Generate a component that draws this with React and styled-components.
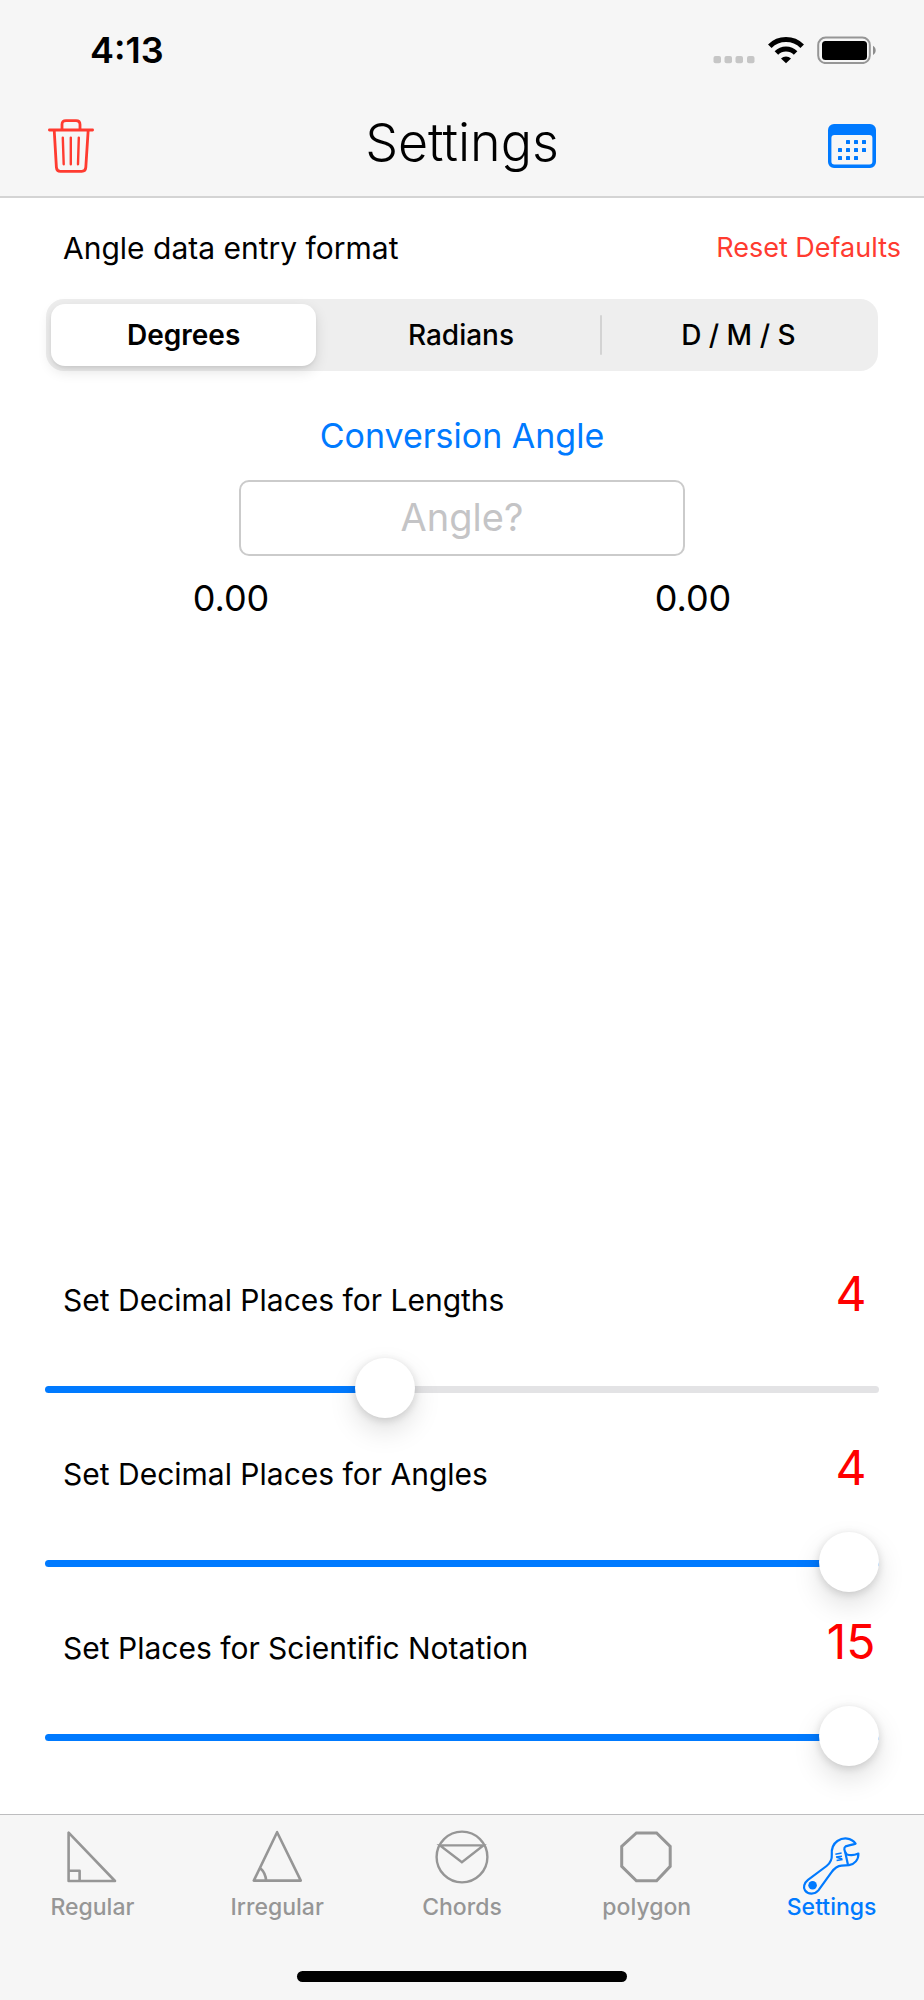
import React, { useState } from "react";
import styled, { createGlobalStyle } from "styled-components";

const BLUE = "#007aff";
const RED = "#ff3b30";

const GlobalStyle = createGlobalStyle`
  *, *::before, *::after { box-sizing: border-box; }
  body {
    margin: 0;
    background: #fff;
    color: #000;
    font-family: Inter, "Liberation Sans", sans-serif;
  }
  button, input { font-family: inherit; }
`;

const Screen = styled.div`
  min-height: 100vh;
  display: flex;
  flex-direction: column;
`;

const Header = styled.header`
  background: #f6f6f6;
  border-bottom: 2px solid #d4d4d4;
`;

const StatusBar = styled.div`
  height: 100px;
  padding: 0 47px 0 90px;
  display: flex;
  align-items: center;
  justify-content: space-between;
`;

const Time = styled.time`
  font-size: 36px;
  font-weight: 600;
`;

const StatusIcons = styled.div`
  display: flex;
  align-items: center;
  gap: 13px;

  svg { display: block; }
`;

const NavBar = styled.div`
  height: 96px;
  padding: 0 48px 4px;
  display: grid;
  grid-template-columns: 1fr auto 1fr;
  align-items: center;
`;

const IconButton = styled.button`
  justify-self: ${(p) => p.$align};
  padding: 0;
  border: 0;
  background: none;
  color: ${(p) => p.$color};

  svg { display: block; }
`;

const Title = styled.h1`
  margin: 0;
  padding-bottom: 6px;
  font-size: 52px;
  font-weight: 300;
  line-height: 60px;
`;

const Main = styled.main`
  flex: 1;
  display: flex;
  flex-direction: column;
`;

const FormatRow = styled.div`
  height: 101px;
  padding: 0 23px 2px 63px;
  display: flex;
  align-items: center;
  justify-content: space-between;
`;

const Caption = styled.span`
  font-size: 30px;
  line-height: 40px;
`;

const ResetButton = styled.button`
  padding: 0;
  border: 0;
  background: none;
  color: ${RED};
  font-size: 27px;
  line-height: 40px;
`;

const Segments = styled.div`
  height: 72px;
  margin: 0 46px;
  display: grid;
  grid-template-columns: repeat(3, 1fr);
  border-radius: 18px;
  background: #eee;
`;

const Segment = styled.label`
  position: relative;
  display: flex;
  padding: 5px 7px 5px 5px;

  &::before {
    content: "";
    display: ${(p) => (p.$divided ? "block" : "none")};
    position: absolute;
    left: -1px;
    top: 16px;
    width: 2px;
    height: 40px;
    border-radius: 1px;
    background: #d3d3d3;
  }

  input {
    appearance: none;
    position: absolute;
    inset: 5px;
    margin: 0;
  }

  span {
    flex: 1;
    display: flex;
    align-items: center;
    justify-content: center;
    border-radius: 14px;
    font-size: 28px;
    font-weight: 500;
  }

  input:checked + span {
    background: #fff;
    font-weight: 600;
    box-shadow: 0 5px 14px rgba(0, 0, 0, 0.12), 0 2px 3px rgba(0, 0, 0, 0.06);
  }
`;

const Conversion = styled.section`
  padding-top: 43px;
  display: flex;
  flex-direction: column;
  align-items: center;
`;

const ConversionLabel = styled.label`
  color: ${BLUE};
  font-size: 34px;
  line-height: 44px;
`;

const AngleInput = styled.input`
  width: 446px;
  max-width: 90%;
  height: 76px;
  margin-top: 22px;
  padding: 0 16px 2px;
  border: 2px solid #cbcbcb;
  border-radius: 10px;
  background: #fff;
  font-size: 38px;
  text-align: center;

  &::placeholder { color: #c4c4c6; opacity: 1; }
`;

const Results = styled.div`
  align-self: stretch;
  margin-top: 18px;
  display: grid;
  grid-template-columns: 1fr 1fr;
  text-align: center;
`;

const Result = styled.output`
  font-size: 36px;
  line-height: 48px;
`;

const Precision = styled.section`
  margin-top: auto;
  padding: 40px 45px 47px;
  display: flex;
  flex-direction: column;
  gap: 19px;
`;

const SettingHead = styled.div`
  padding-left: 18px;
  display: flex;
  align-items: baseline;
  justify-content: space-between;
`;

const SettingLabel = styled.label`
  font-size: 30px;
  line-height: 40px;
`;

const SettingValue = styled.output`
  width: 56px;
  display: flex;
  justify-content: center;
  color: #f00;
  font-size: 48px;
  line-height: 60px;
`;

const Slider = styled.input`
  appearance: none;
  display: block;
  width: 100%;
  height: 60px;
  margin: 35px 0 0;
  background: none;

  &::-webkit-slider-runnable-track {
    height: 7px;
    border-radius: 4px;
    background: linear-gradient(
      to right,
      ${BLUE} var(--fill),
      #e3e3e5 var(--fill)
    );
  }

  &::-webkit-slider-thumb {
    appearance: none;
    width: 60px;
    height: 60px;
    margin-top: -28px;
    border-radius: 50%;
    background: #fff;
    box-shadow: 0 12px 28px rgba(0, 0, 0, 0.13), 0 2px 8px rgba(0, 0, 0, 0.14);
  }
`;

const Footer = styled.footer`
  padding: 14px 0 18px;
  border-top: 1px solid #bdbdbf;
  background: #f6f6f6;
`;

const Tabs = styled.nav`
  display: grid;
  grid-template-columns: repeat(5, 1fr);
`;

const Tab = styled.a`
  display: flex;
  flex-direction: column;
  align-items: center;
  color: ${(p) => (p.$active ? BLUE : "#969696")};
  font-size: 23px;
  font-weight: 500;
  line-height: 26px;
  text-decoration: none;

  svg { display: block; overflow: visible; }
`;

const HomeIndicator = styled.div`
  width: 330px;
  height: 11px;
  margin: 51px auto 0;
  border-radius: 6px;
  background: #000;
`;

const SignalDots = () => (
  <svg width="42" height="28" viewBox="0 0 42 28" fill="#c6c6c6" aria-hidden="true">
    {[0, 11, 22, 33.5].map((x) => (
      <rect key={x} x={x + 0.5} y="20" width="7.5" height="7.3" rx="2" />
    ))}
  </svg>
);

const Wifi = () => (
  <svg width="36" height="28" viewBox="0 0 36 28" aria-hidden="true">
    <g fill="none" stroke="#000" strokeWidth="5">
      <path d="M1.8 10.2a23 23 0 0 1 32.4 0" />
      <path d="M8.4 17a13.6 13.6 0 0 1 19.2 0" />
    </g>
    <path d="M13 22.4a7.4 7.4 0 0 1 10 0L18 27.2z" />
  </svg>
);

const Battery = () => (
  <svg width="60" height="28" viewBox="0 0 60 28" aria-hidden="true">
    <rect x="1.2" y="1.5" width="51.6" height="25.6" rx="7.5" fill="none" stroke="#969696" strokeWidth="2" />
    <rect x="5" y="5" width="45" height="19" rx="3.5" />
    <path d="M56 9.8c3.6 2 3.6 7.2 0 9.2z" fill="#8d8d8d" />
  </svg>
);

const Trash = () => (
  <svg width="46" height="54" viewBox="0 0 46 54" fill="none" stroke="currentColor" strokeLinecap="round" strokeLinejoin="round" aria-hidden="true">
    <path strokeWidth="2.8" d="M1.4 11h43.2M14 11V5.6Q14 1.6 18 1.6h10Q32 1.6 32 5.6V11M6.2 11l2.2 37.4Q8.7 52.3 12.4 52.3h21.4Q37.5 52.3 37.8 48.4L40.2 11" />
    <path strokeWidth="2.4" d="M14.8 18.6l.9 26.6M22.8 18.6v26.6M30.8 18.6l-.8 26.6" />
  </svg>
);

const Calendar = () => (
  <svg width="48" height="44" viewBox="0 0 48 44" fill="currentColor" aria-hidden="true">
    <path fillRule="evenodd" d="M6 0h36a6 6 0 0 1 6 6v32a6 6 0 0 1-6 6H6a6 6 0 0 1-6-6V6a6 6 0 0 1 6-6zM6.4 11a3 3 0 0 0-3 3v23.4a3 3 0 0 0 3 3h35a3 3 0 0 0 3-3V14a3 3 0 0 0-3-3z" />
    {[[20, 18], [28, 18], [36, 18], [12, 26], [20, 26], [28, 26], [36, 26], [12, 34], [20, 34], [28, 34]].map(([x, y]) => (
      <rect key={`${x}-${y}`} x={x - 2} y={y - 2} width="4" height="4" rx="0.6" />
    ))}
  </svg>
);

const TabIcon = ({ children, weight = 2.6 }) => (
  <svg width="64" height="65" viewBox="0 0 64 65" fill="none" stroke="currentColor" strokeWidth={weight} strokeLinejoin="round" aria-hidden="true">
    {children}
  </svg>
);

const TABS = [
  {
    name: "Regular",
    icon: (
      <TabIcon>
        <path d="M8.6 3.6V52H55zM8.6 41.7h11V52" />
      </TabIcon>
    ),
  },
  {
    name: "Irregular",
    icon: (
      <TabIcon>
        <path d="M32.1 3.2L8.8 51.6h47zM15.6 39.4q4.8 4.2 5.6 12.2" />
      </TabIcon>
    ),
  },
  {
    name: "Chords",
    icon: (
      <TabIcon weight={2.4}>
        <circle cx="32" cy="28" r="25.4" />
        <path strokeLinejoin="miter" d="M10 16.4h43.4L31.9 33.2z" />
      </TabIcon>
    ),
  },
  {
    name: "polygon",
    icon: (
      <TabIcon weight={3}>
        <path strokeLinejoin="miter" d="M21.4 4h20.2L55.2 17.4v20L41.6 51.8H21.4L6.7 37.4v-20z" />
      </TabIcon>
    ),
  },
  {
    name: "Settings",
    icon: (
      <TabIcon weight={2.2}>
        <path d="M55.6 14.6C51.2 8.6 43.4 8 37.4 12C32.6 15.4 31.4 20 31.8 25.4C32.2 31 30 34.4 26.6 37L8 50.8C4 54 3 58.4 5 61.4C8.2 66 15 65.4 18.4 61.4L31.4 43.4C34 39.6 37 36.8 41.6 36.6L49 36.2C54.6 35.2 58.6 30.8 58.4 24.6C54.6 26.2 51 27.2 46.4 25.2C44 21.8 43.6 18.6 45.6 17.4C48.4 16.4 52.4 15.8 55.6 14.6z" />
        <path d="M45.2 23L48 36" />
        <path strokeWidth="1.5" d="M35.4 25.2l6.2-1.2M36 28l6-.8M36.6 28.2l5.6 1.8M36.6 31.4l6-1" />
        <circle cx="12.6" cy="56.2" r="4.3" fill="currentColor" stroke="none" />
      </TabIcon>
    ),
  },
];

const FORMATS = ["Degrees", "Radians", "D / M / S"];

function Setting({ id, label, max, initial }) {
  const [value, setValue] = useState(initial);
  return (
    <div>
      <SettingHead>
        <SettingLabel htmlFor={id}>{label}</SettingLabel>
        <SettingValue htmlFor={id}>{value}</SettingValue>
      </SettingHead>
      <Slider
        id={id}
        type="range"
        min="0"
        max={max}
        value={value}
        onChange={(e) => setValue(Number(e.target.value))}
        style={{ "--fill": `${(value / max) * 100}%` }}
      />
    </div>
  );
}

export default function App() {
  const [format, setFormat] = useState("Degrees");
  return (
    <Screen>
      <GlobalStyle />
      <Header>
        <StatusBar>
          <Time>4:13</Time>
          <StatusIcons>
            <SignalDots />
            <Wifi />
            <Battery />
          </StatusIcons>
        </StatusBar>
        <NavBar>
          <IconButton type="button" aria-label="Delete" $align="start" $color={RED}>
            <Trash />
          </IconButton>
          <Title>Settings</Title>
          <IconButton type="button" aria-label="Calendar" $align="end" $color={BLUE}>
            <Calendar />
          </IconButton>
        </NavBar>
      </Header>
      <Main>
        <FormatRow>
          <Caption id="format-caption">Angle data entry format</Caption>
          <ResetButton type="button">Reset Defaults</ResetButton>
        </FormatRow>
        <Segments role="radiogroup" aria-labelledby="format-caption">
          {FORMATS.map((name, i) => (
            <Segment key={name} $divided={i === 2}>
              <input
                type="radio"
                name="format"
                checked={format === name}
                onChange={() => setFormat(name)}
              />
              <span>{name}</span>
            </Segment>
          ))}
        </Segments>
        <Conversion>
          <ConversionLabel htmlFor="angle">Conversion Angle</ConversionLabel>
          <AngleInput id="angle" type="text" inputMode="decimal" placeholder="Angle?" />
          <Results>
            <Result htmlFor="angle">0.00</Result>
            <Result htmlFor="angle">0.00</Result>
          </Results>
        </Conversion>
        <Precision>
          <Setting id="lengths" label="Set Decimal Places for Lengths" max={10} initial={4} />
          <Setting id="angles" label="Set Decimal Places for Angles" max={4} initial={4} />
          <Setting id="scientific" label="Set Places for Scientific Notation" max={15} initial={15} />
        </Precision>
      </Main>
      <Footer>
        <Tabs aria-label="Sections">
          {TABS.map(({ name, icon }) => (
            <Tab
              key={name}
              href={`#${name.toLowerCase()}`}
              $active={name === "Settings"}
              aria-current={name === "Settings" ? "page" : undefined}
            >
              {icon}
              {name}
            </Tab>
          ))}
        </Tabs>
        <HomeIndicator />
      </Footer>
    </Screen>
  );
}
